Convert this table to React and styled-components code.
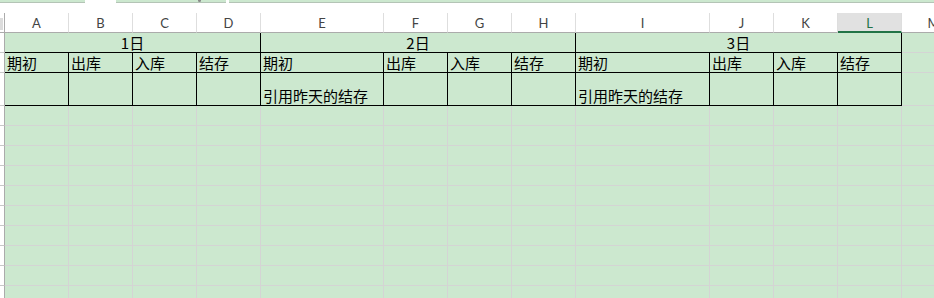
import React from "react";
import styled, { createGlobalStyle } from "styled-components";

const GlobalStyle = createGlobalStyle`
  html, body { margin: 0; padding: 0; background: #ffffff; overflow: hidden; }
  * { box-sizing: border-box; }
`;

const GRID = "#d4d4d4";
const SHEET_BG = "#cce8cf";
const INK = "#000000";

const Page = styled.div`
  width: 934px;
  height: 298px;
  overflow: hidden;
  background: #ffffff;
`;

const TabStrip = styled.div`
  display: flex;
  align-items: flex-start;
  height: 13px;
`;

const TabSeg = styled.div`
  height: 3px;
  width: ${(p) => p.$w}px;
  flex: ${(p) => (p.$grow ? "1 1 auto" : "0 0 auto")};
  margin-left: ${(p) => p.$gap || 0}px;
  background: ${SHEET_BG};
  border-bottom: 1px solid #b4c4b6;
  position: relative;
`;

const TabDot = styled.span`
  position: absolute;
  left: 82px;
  top: 0;
  width: 3px;
  height: 2px;
  border-radius: 0 0 2px 2px;
  background: #8a8a8a;
`;

const Sheet = styled.div`
  display: grid;
  width: max-content;
  grid-template-columns: 5px 64px 64px 64px 64px 123px 64px 64px 64px 134px 64px 64px 64px 64px;
  grid-template-rows: 20px 20px 20px 33px;
  grid-auto-rows: 20px;
  background: ${SHEET_BG};
`;

const Corner = styled.div`
  background: #ffffff;
  border-right: 1px solid #ababab;
  border-bottom: 1px solid #ababab;
  position: relative;
  &::before {
    content: "";
    position: absolute;
    left: 0;
    top: 5px;
    width: 3px;
    height: 12px;
    background: #dcdcdc;
  }
`;

const ColHead = styled.div`
  display: flex;
  align-items: center;
  justify-content: center;
  background: ${(p) => (p.$selected ? "#e1e1e1" : "#ffffff")};
  border-right: 1px solid #dedede;
  border-bottom: ${(p) => (p.$selected ? "2px solid #217346" : "1px solid #ababab")};
  font-family: Lato, "Liberation Sans", sans-serif;
  font-size: 13px;
  color: ${(p) => (p.$selected ? "#217346" : "#444444")};
  padding-top: ${(p) => (p.$selected ? "1px" : "0")};
`;

const RowHead = styled.div`
  background: #ffffff;
  border-right: 1px solid #ababab;
  border-bottom: 1px solid #c8c8c8;
`;

const Cell = styled.div`
  grid-column: span ${(p) => p.$span || 1};
  display: flex;
  align-items: flex-end;
  justify-content: ${(p) => (p.$center ? "center" : "flex-start")};
  padding: 0 2px 0 2px;
  border-right: 1px solid ${(p) => (p.$edge ? INK : GRID)};
  border-bottom: 1px solid ${(p) => (p.$edge ? INK : GRID)};
  font-family: "Noto Sans CJK SC", "Liberation Sans", sans-serif;
  font-size: 15px;
  line-height: 19px;
  color: #000000;
  white-space: nowrap;
`;

const columns = ["A", "B", "C", "D", "E", "F", "G", "H", "I", "J", "K", "L", "M"];
const subHeads = ["期初", "出库", "入库", "结存"];
const days = ["1日", "2日", "3日"];
const carried = ["", "引用昨天的结存", "引用昨天的结存"];
const FILLER_ROWS = 10;

export default function App() {
  return (
    <Page>
      <GlobalStyle />
      <TabStrip>
        <TabSeg $w={85} />
        <TabSeg $w={110} $gap={31}>
          <TabDot />
        </TabSeg>
        <TabSeg $grow $gap={3} />
      </TabStrip>
      <Sheet>
        <Corner />
        {columns.map((c) => (
          <ColHead key={c} $selected={c === "L"}>
            {c}
          </ColHead>
        ))}

        <RowHead />
        {days.map((d) => (
          <Cell key={d} $span={4} $center $edge>
            {d}
          </Cell>
        ))}
        <Cell />

        <RowHead />
        {days.map((d) =>
          subHeads.map((s) => (
            <Cell key={d + s} $edge>
              {s}
            </Cell>
          ))
        )}
        <Cell />

        <RowHead />
        {days.map((d, i) =>
          subHeads.map((s, j) => (
            <Cell key={d + s + "v"} $edge>
              {j === 0 ? carried[i] : ""}
            </Cell>
          ))
        )}
        <Cell />

        {Array.from({ length: FILLER_ROWS }).map((_, r) => (
          <React.Fragment key={r}>
            <RowHead />
            {columns.map((c) => (
              <Cell key={c} />
            ))}
          </React.Fragment>
        ))}
      </Sheet>
    </Page>
  );
}
